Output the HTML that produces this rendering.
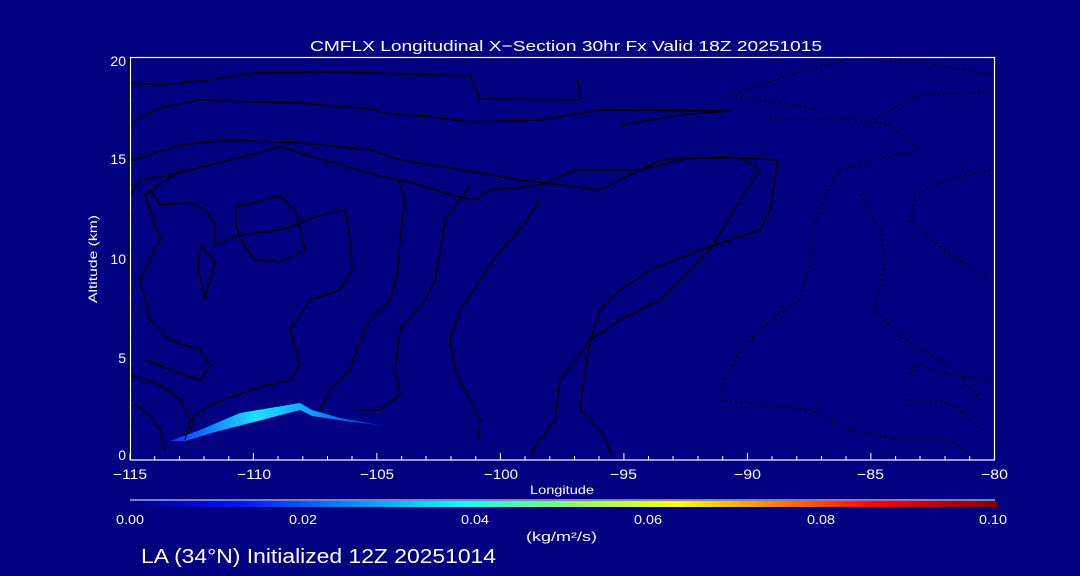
<!DOCTYPE html>
<html><head><style>
html,body{margin:0;padding:0;background:#000080;}
body{width:1080px;height:576px;overflow:hidden;position:relative;font-family:"Liberation Sans",sans-serif;color:#fff;}
svg{position:absolute;left:0;top:0;}
text{font-family:"Liberation Sans",sans-serif;fill:#fff;}
</style></head><body>
<svg width="1080" height="576" viewBox="0 0 1080 576">
<defs>
<linearGradient id="cb" x1="0" x2="1">
<stop offset="0" stop-color="#000080"/><stop offset="0.12" stop-color="#0010ff"/>
<stop offset="0.38" stop-color="#00ffff"/><stop offset="0.52" stop-color="#90ff60"/>
<stop offset="0.63" stop-color="#ffff00"/><stop offset="0.86" stop-color="#ff0000"/>
<stop offset="1" stop-color="#800000"/></linearGradient>
<linearGradient id="pl" x1="0" x2="1">
<stop offset="0" stop-color="#0030ff"/><stop offset="0.4" stop-color="#20e0ff"/><stop offset="0.65" stop-color="#10a0ff"/><stop offset="1" stop-color="#0020e0"/></linearGradient>
</defs>
<text x="310" y="51" font-size="15" textLength="512" lengthAdjust="spacingAndGlyphs">CMFLX Longitudinal X−Section 30hr  Fx Valid 18Z 20251015</text>
<path d="M170 441 L200 430 L240 413 L300 403 L312 410 L340 418 L385 426 L345 421 L312 416 L300 410 L262 420 L215 432 L185 441 Z" fill="url(#pl)"/>
<g fill="none" stroke="#000" stroke-width="1.5">
<path d="M130 83 L160 85 L210 80 L255 73 L340 72 L470 76 L480 99 L580 100 L578 80"/>
<path d="M130 123 L160 108 L200 100 L250 102 L300 103 L370 109 L390 114 L430 117 L470 122 L540 120 L600 110 L730 111 L680 115 L620 125"/>
<path d="M130 161 L180 145 L230 140 L300 143 L370 150 L400 160 L460 170 L520 180 L600 190 L660 160 L720 157 L778 160 L770 210 L760 230 L700 250 L650 270 L620 290 L600 310 L590 340 L585 370 L580 410 L600 430 L612 455"/>
<path d="M130 196 L140 180 L170 175 L230 160 L280 147 L330 162 L375 175 L420 185 L450 195 L475 200 L490 190 L540 185 L575 170 L640 170 L690 158 L740 158 L760 170 L740 200 L710 250 L660 300 L620 320 L590 340 L560 380 L555 420 L540 440 L530 455"/>
<path d="M150 190 L160 205 L190 203 L205 210 L215 225 L215 245 L240 235 L280 230 L300 223 L320 215 L345 210 L350 240 L352 270 L340 290 L310 300 L290 330 L300 365 L290 380 L250 390 L210 405 L195 415 L190 430"/>
<path d="M236 207 L280 196 L295 210 L305 250 L280 262 L255 260 L240 240 L236 225 Z"/>
<path d="M200 245 L215 262 L205 298 L198 270 Z"/>
<path d="M180 170 L145 195 L160 240 L140 280 L150 320 L170 340 L200 350 L210 365 L200 380 L170 370 L145 360"/>
<path d="M398 180 L405 200 L400 240 L398 270 L390 300 L370 320 L360 340 L350 370 L330 390 L320 410"/>
<path d="M470 185 L460 200 L445 220 L440 250 L435 280 L425 300 L400 330 L395 370 L400 395 L380 410 L355 410"/>
<path d="M540 200 L520 230 L500 250 L480 280 L460 310 L450 340 L455 370 L470 400 L480 420 L478 440"/>
<path d="M130 375 L160 385 L180 400 L190 420 L185 440"/>
<path d="M135 405 L150 415 L160 430 L165 450"/>
<path d="M130 57 L130 456" stroke-width="3" stroke-dasharray="20 2"/>
</g>
<g fill="none" stroke="#000" stroke-width="1.6" stroke-dasharray="1.5 3.5">
<path d="M730 95 L790 75 L850 58 L920 62 L990 75"/>
<path d="M730 95 L790 105 L820 110"/>
<path d="M770 120 L843 118 L890 125 L920 150 L870 160 L840 170 L828 190 L815 220 L810 260 L800 300 L770 320 L740 350 L720 390"/>
<path d="M870 122 L918 95 L990 92"/>
<path d="M860 195 L880 230 L885 260 L875 310 L905 340 L955 370 L980 400"/>
<path d="M990 170 L945 180 L915 195 L910 220 L950 255 L990 280"/>
<path d="M720 400 L760 405 L810 410 L830 420 L850 430 L900 440 L950 440 L970 455"/>
<path d="M990 380 L950 375 L920 365 L905 375"/>
<path d="M905 400 L940 400 L960 410 L980 430"/>
</g>
<rect x="130.5" y="57.5" width="864" height="402.5" fill="none" stroke="#fff" stroke-width="1.2"/>
<g stroke="#fff" stroke-width="1">
<path d="M130 460 V453 M154.7 460 V456 M179.4 460 V456 M204 460 V456 M228.8 460 V456 M253.4 460 V453 M278 460 V456 M302.8 460 V456 M327.5 460 V456 M352 460 V456 M376.9 460 V453 M401.6 460 V456 M426 460 V456 M451 460 V456 M475.7 460 V456 M500.4 460 V453 M525 460 V456 M549.8 460 V456 M574.5 460 V456 M599 460 V456 M623.9 460 V453 M648.6 460 V456 M673 460 V456 M698 460 V456 M722.7 460 V456 M747.4 460 V453 M772 460 V456 M796.8 460 V456 M821.5 460 V456 M846 460 V456 M870.9 460 V453 M895.6 460 V456 M920 460 V456 M945 460 V456 M969.7 460 V456"/>
</g>
<g font-size="14">
<text x="126" y="66" text-anchor="end">20</text>
<text x="126" y="164" text-anchor="end">15</text>
<text x="126" y="264" text-anchor="end">10</text>
<text x="126" y="363" text-anchor="end">5</text>
<text x="126" y="460" text-anchor="end">0</text>
<text x="113" y="479" textLength="34" lengthAdjust="spacingAndGlyphs">−115</text>
<text x="237" y="479" textLength="34" lengthAdjust="spacingAndGlyphs">−110</text>
<text x="360" y="479" textLength="34" lengthAdjust="spacingAndGlyphs">−105</text>
<text x="484" y="479" textLength="34" lengthAdjust="spacingAndGlyphs">−100</text>
<text x="610" y="479" textLength="27" lengthAdjust="spacingAndGlyphs">−95</text>
<text x="734" y="479" textLength="27" lengthAdjust="spacingAndGlyphs">−90</text>
<text x="857" y="479" textLength="27" lengthAdjust="spacingAndGlyphs">−85</text>
<text x="981" y="479" textLength="27" lengthAdjust="spacingAndGlyphs">−80</text>
</g>
<text x="530" y="494" font-size="12" textLength="64" lengthAdjust="spacingAndGlyphs">Longitude</text>
<text transform="translate(97,303) rotate(-90)" font-size="12" textLength="88" lengthAdjust="spacingAndGlyphs">Altitude (km)</text>
<line x1="130" y1="500" x2="995" y2="500" stroke="#fff" stroke-width="1"/>
<rect x="130" y="501" width="867" height="6" fill="url(#cb)"/>
<g font-size="13">
<text x="116" y="524" textLength="28" lengthAdjust="spacingAndGlyphs">0.00</text>
<text x="289" y="524" textLength="28" lengthAdjust="spacingAndGlyphs">0.02</text>
<text x="461" y="524" textLength="28" lengthAdjust="spacingAndGlyphs">0.04</text>
<text x="634" y="524" textLength="28" lengthAdjust="spacingAndGlyphs">0.06</text>
<text x="807" y="524" textLength="28" lengthAdjust="spacingAndGlyphs">0.08</text>
<text x="979" y="524" textLength="28" lengthAdjust="spacingAndGlyphs">0.10</text>
<text x="526" y="541" textLength="71" lengthAdjust="spacingAndGlyphs">(kg/m²/s)</text>
</g>
<text x="141" y="563" font-size="20" textLength="355" lengthAdjust="spacingAndGlyphs">LA (34°N) Initialized 12Z 20251014</text>
</svg>
</body></html>
